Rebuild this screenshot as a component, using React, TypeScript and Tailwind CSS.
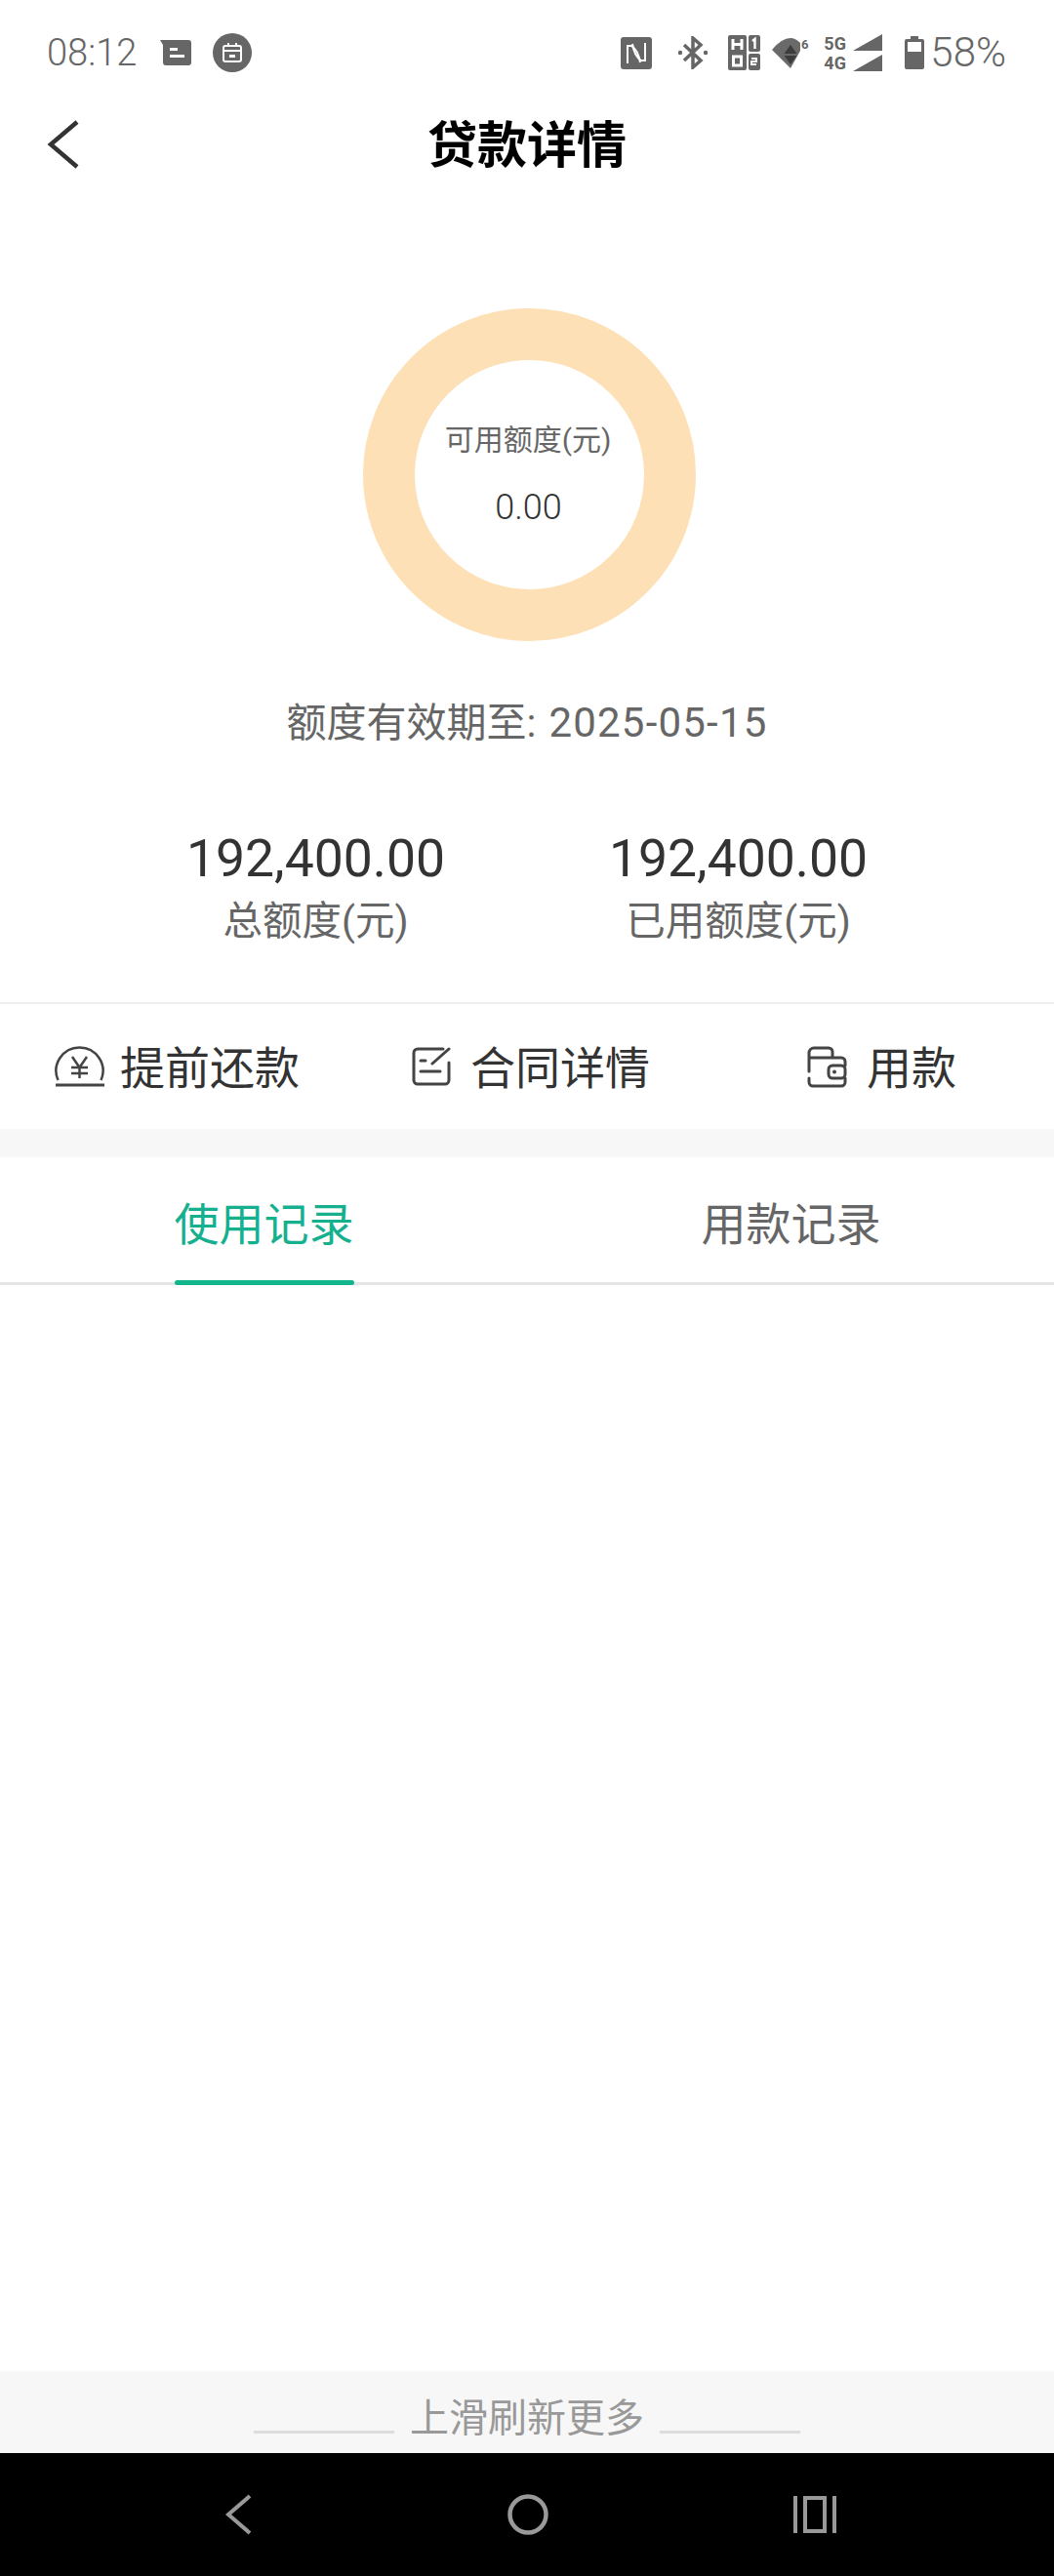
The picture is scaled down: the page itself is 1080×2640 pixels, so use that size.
import React from "react";

const F = { fontFamily: '"Roboto","Noto Sans CJK SC",sans-serif' };

function StatusIcons() {
  return (
    <div className="flex items-center">
      <svg width="32" height="33" viewBox="0 0 32 33">
        <rect x="0" y="0" width="32" height="33" rx="3" fill="#666" />
        <path d="M7 27V9H11C16 12 19 20 20 26" fill="none" stroke="#fff" strokeWidth="2" />
        <path d="M25 6V24H21C16 21 13 13 12 7" fill="none" stroke="#fff" strokeWidth="2" />
      </svg>
      <svg width="30" height="34" viewBox="0 0 30 34" className="ml-[27px]">
        <path d="M6 9l17 16-8 7V2l8 7L6 25" fill="none" stroke="#666" strokeWidth="3.500" />
        <circle cx="2" cy="17" r="2.200" fill="#666" />
        <circle cx="28" cy="17" r="2.200" fill="#666" />
      </svg>
      <svg width="33" height="36" viewBox="0 0 33 36" className="ml-[21px]">
        <rect x="0" y="0" width="19" height="36" rx="2" fill="#666" />
        <rect x="21" y="0" width="12" height="17" rx="2" fill="#666" />
        <rect x="21" y="19" width="12" height="17" rx="2" fill="#666" />
        <path d="M5 4v11M14 4v11M5 9.500h9" stroke="#fff" strokeWidth="3" fill="none" />
        <rect x="5.500" y="22" width="8" height="9" fill="none" stroke="#fff" strokeWidth="3" />
        <path d="M25 6l2.500-2v10" stroke="#fff" strokeWidth="2.400" fill="none" />
        <path d="M24 24h5v3h-5v3h5" stroke="#fff" strokeWidth="1.800" fill="none" />
      </svg>
      <svg width="39" height="33" viewBox="0 0 39 33" className="ml-[12px]">
        <path d="M0 13Q10 1 19 1Q24 1 29 6V14L19 32Z" fill="#6a6a6a" />
        <path d="M19 8l6.500 9h-13Z M12.500 19h13L19 28Z" fill="#3c3c3c" />
        <text x="30" y="12" fontSize="13" fontWeight="700" fill="#666" style={F}>6</text>
      </svg>
      <div className="ml-[14px] w-[60px] h-[38px] relative flex flex-col justify-center">
        <span className="text-[18px] leading-[19px] font-bold text-[#666]">5G</span>
        <span className="text-[18px] leading-[19px] font-bold text-[#666] mt-[1px]">4G</span>
        <svg width="30" height="38" viewBox="0 0 30 38" className="absolute right-0 top-0">
          <path d="M0 17L30 0v17ZM0 38l30-17v17Z" fill="#666" />
        </svg>
      </div>
      <svg width="20" height="34" viewBox="0 0 20 34" className="ml-[23px]">
        <path d="M6 0h8v3h4a2 2 0 012 2v27a2 2 0 01-2 2H2a2 2 0 01-2-2V5a2 2 0 012-2h4Z" fill="#666" />
        <rect x="3" y="6" width="14" height="10" fill="#fff" />
      </svg>
      <span className="ml-[6px] text-[42px] leading-[44px] font-light text-[#666]">58%</span>
    </div>
  );
}

function ActionItem({ icon, label, className }: { icon: React.ReactNode; label: string; className: string }) {
  return (
    <div className={"flex items-center " + className}>
      {icon}
      <span className="text-[46px] leading-[56px] text-[#333] mt-[4px]">{label}</span>
    </div>
  );
}

export default function App() {
  return (
    <div className="w-[1080px] h-[2640px] bg-white flex flex-col" style={F}>
      <div className="h-[108px] shrink-0 flex items-center justify-between pl-[48px] pr-[49px]">
        <div className="flex items-center">
          <span className="text-[38px] leading-[44px] font-light text-[#666]">08:12</span>
          <svg width="32" height="26" viewBox="0 0 32 26" className="ml-[24px]">
            <path d="M0 0h29a3 3 0 013 3v20a3 3 0 01-3 3H6a3 3 0 01-3-3V5Z" fill="#666" />
            <rect x="10" y="8" width="8" height="3" fill="#fff" />
            <rect x="10" y="15" width="15" height="3" fill="#fff" />
          </svg>
          <div className="ml-[22px] w-[40px] h-[40px] rounded-full bg-[#666] flex items-center justify-center">
            <svg width="20" height="20" viewBox="0 0 20 20">
              <rect x="1" y="3" width="18" height="16" rx="2" fill="none" stroke="#fff" strokeWidth="2" />
              <path d="M1 8h18M6 0v4M14 0v4" stroke="#fff" strokeWidth="2" />
              <rect x="7" y="12" width="6" height="3" fill="#fff" />
            </svg>
          </div>
        </div>
        <StatusIcons />
      </div>

      <div className="h-[84px] shrink-0 relative flex items-center justify-center">
        <svg width="33" height="50" viewBox="0 0 33 50" className="absolute left-[48px] top-[15px]">
          <path d="M31 2L4 25l27 23" fill="none" stroke="#333" strokeWidth="4.500" />
        </svg>
        <span className="text-[51px] leading-[60px] font-bold text-black">贷款详情</span>
      </div>

      <div className="flex flex-col items-center pt-[124px]">
        <div className="ml-[5px] w-[341px] h-[341px] rounded-full border-[53px] border-[#fde0b6] flex flex-col items-center">
          <span className="mt-[64px] mr-[3px] text-[30px] leading-[36px] text-[#666]">可用额度(元)</span>
          <span className="mt-[31px] mr-[2px] text-[36px] leading-[40px] font-light text-[#333]">0.00</span>
        </div>
        <div className="mt-[60px] h-[48px] leading-[48px] text-[#666]">
          <span className="text-[41px]">额度有效期至:</span>
          <span className="text-[42px] ml-[13px] tracking-[1.2px]">2025-05-15</span>
        </div>
      </div>

      <div className="mt-[85px] flex justify-center gap-[170px]">
        <div className="flex flex-col items-center w-[263px]">
          <span className="text-[53.500px] leading-[60px] text-[#333]">192,400.00</span>
          <span className="mt-[11px] text-[40.500px] leading-[46px] text-[#666]">总额度(元)</span>
        </div>
        <div className="flex flex-col items-center w-[263px]">
          <span className="text-[53.500px] leading-[60px] text-[#333]">192,400.00</span>
          <span className="mt-[11px] text-[40.500px] leading-[46px] text-[#666]">已用额度(元)</span>
        </div>
      </div>

      <div className="mt-[60px] h-[130px] border-t-2 border-[#eeeeee] flex items-center shrink-0">
        <ActionItem
          className="ml-[56px]"
          label="提前还款"
          icon={
            <svg width="52" height="42" viewBox="0 0 52 42" className="mr-[15px]">
              <path d="M3.500 35A24 24 0 1 1 47.500 35" fill="none" stroke="#444" strokeWidth="2.500" />
              <path d="M18 11l7.500 11L33 11M25.500 22v11M17 22h17M17 28h17" fill="none" stroke="#444" strokeWidth="2.500" />
              <rect x="1" y="38.500" width="50" height="3" fill="#444" />
            </svg>
          }
        />
        <ActionItem
          className="ml-[115px]"
          label="合同详情"
          icon={
            <svg width="40" height="40" viewBox="0 0 40 40" className="mr-[20px]">
              <path d="M32 2H6a4 4 0 00-4 4v28a4 4 0 004 4h28a4 4 0 004-4V16" fill="none" stroke="#444" strokeWidth="3" strokeLinecap="round" />
              <path d="M21 17L38 2" fill="none" stroke="#444" strokeWidth="3" strokeLinecap="round" />
              <path d="M9 14h5M9 25h20" fill="none" stroke="#444" strokeWidth="3" strokeLinecap="round" />
            </svg>
          }
        />
        <ActionItem
          className="ml-[161px]"
          label="用款"
          icon={
            <svg width="41" height="43" viewBox="0 0 41 43" className="mr-[20px]">
              <path d="M2 26V7a5 5 0 015-5h15a4 4 0 014 4v6M2 33v4a4 4 0 004 4h29a4 4 0 004-4v-4M39 20v-4a4 4 0 00-4-4H2" fill="none" stroke="#444" strokeWidth="3" strokeLinecap="round" />
              <rect x="22" y="20" width="17" height="13" rx="4" fill="none" stroke="#444" strokeWidth="3" />
              <circle cx="28" cy="26.500" r="2" fill="#444" />
            </svg>
          }
        />
      </div>

      <div className="h-[29px] shrink-0 bg-[#f7f7f7]" />

      <div className="h-[131px] shrink-0 flex items-stretch border-b-[3px] border-[#e5e5e5]">
        <div className="w-[541px] flex justify-center">
          <div className="relative h-full flex items-center text-[46px] text-[#16b08f] pt-[10px]">
            使用记录
            <div className="absolute left-0 right-0 -bottom-[3px] h-[5px] rounded-sm bg-[#12b48c]" />
          </div>
        </div>
        <div className="w-[539px] flex justify-center">
          <div className="h-full flex items-center text-[46px] text-[#666] pt-[10px]">用款记录</div>
        </div>
      </div>

      <div className="flex-1" />

      <div className="h-[84px] shrink-0 bg-[#f7f7f7] flex items-center justify-center">
        <div className="w-[144px] h-[3px] bg-[#dddddd] mt-[40px]" />
        <span className="mx-[16px] mt-[13px] text-[40px] leading-[48px] text-[#999]">上滑刷新更多</span>
        <div className="w-[144px] h-[3px] bg-[#dddddd] mt-[40px]" />
      </div>

      <div className="h-[126px] shrink-0 bg-black flex items-center">
        <svg width="28" height="42" viewBox="0 0 28 42" className="ml-[230px]">
          <path d="M26 2L4 21l22 19" fill="none" stroke="#999" strokeWidth="4" />
        </svg>
        <svg width="42" height="42" viewBox="0 0 42 42" className="ml-[262px]">
          <circle cx="21" cy="21" r="18.500" fill="none" stroke="#999" strokeWidth="4.500" />
        </svg>
        <svg width="44" height="38" viewBox="0 0 44 38" className="ml-[251px]">
          <rect x="0" y="0" width="4" height="38" fill="#999" />
          <rect x="40" y="0" width="4" height="38" fill="#999" />
          <rect x="12" y="2" width="20" height="34" fill="none" stroke="#999" strokeWidth="4" />
        </svg>
      </div>
    </div>
  );
}
